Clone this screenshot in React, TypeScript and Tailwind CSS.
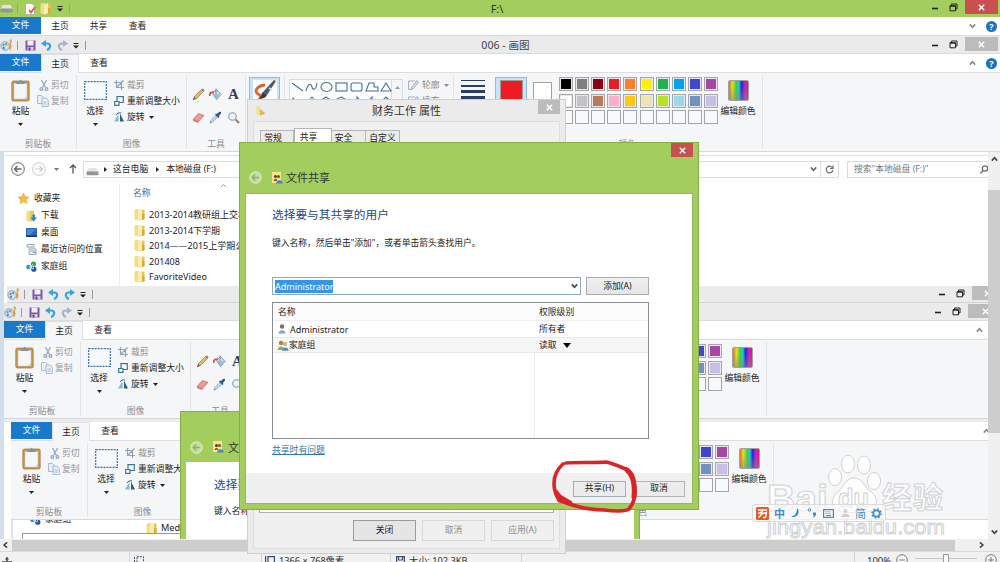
import React from 'react';

const SWATCHES = [
    ['#000000', '#7f7f7f', '#870016', '#ea1c25', '#fe7f29', '#fff200', '#23b14d', '#00a2e9', '#3f48cb', '#a349a3'],
    ['#ffffff', '#c3c3c3', '#b87a57', '#ffaec9', '#ffc90e', '#efe4b0', '#b5e61d', '#99d9ea', '#7092be', '#c8bfe7'],
    ['', '', '', '', '', '', '', '', '', ''],
];

const FILES = ['2013-2014教研组上交材料', '2013-2014下学期', '2014——2015上学期公开课', '201408', 'FavoriteVideo', ''];

const Caret: React.FC<{ className?: string }> = ({ className = '' }) => (
    <svg className={`shrink-0 ${className}`} width="5" height="3" viewBox="0 0 5 3">
        <path d="M0 0H5L2.5 3Z" fill="currentColor" />
    </svg>
);

const Chevron: React.FC<{ up?: boolean; className?: string }> = ({ up, className = '' }) => (
    <svg className={`shrink-0 ${className}`} width="7" height="6" viewBox="0 0 7 6" fill="none" stroke="currentColor" strokeWidth="1.6">
        <path d={up ? 'M0.8 4.6L3.5 1.6L6.2 4.6' : 'M0.8 1.4L3.5 4.4L6.2 1.4'} />
    </svg>
);

const Cross: React.FC = () => (
    <svg width="7" height="7" viewBox="0 0 7 7" stroke="#fff" strokeWidth="1.4">
        <path d="M0.8 0.8L6.2 6.2M6.2 0.8L0.8 6.2" />
    </svg>
);

const Folder: React.FC = () => (
    <svg className="shrink-0" width="11" height="13" viewBox="0 0 11 13">
        <path d="M0.5 1.5L5 0.8V12.5L0.5 11.5Z" fill="#f3dc86" />
        <path d="M5 2L10.5 1.5V11L5 12.5Z" fill="#e8c257" />
        <path d="M4 2.5L8 1V11L4 12.5Z" fill="#fbeeb0" />
        <path d="M8 6H10.5V11.3L8 12Z" fill="#d6a93a" />
    </svg>
);

const Drive: React.FC = () => (
    <svg className="shrink-0" width="13" height="9" viewBox="0 0 13 9">
        <path d="M2.5 1H10.5L12.5 5H0.5Z" fill="#e2e4e6" />
        <rect x="0.5" y="4.5" width="12" height="3.8" rx="1" fill="#8e9499" />
        <rect x="9" y="5.6" width="2" height="1.2" fill="#73d353" />
    </svg>
);

const Palette: React.FC = () => (
    <svg className="shrink-0" width="13" height="13" viewBox="0 0 13 13">
        <path d="M1 8C0 4 3 2 7 3C10 4 10 8 8.500 10C6 12.500 2 12 1 8Z" fill="#b9d8ea" stroke="#6f9fbc" strokeWidth="0.7" />
        <circle cx="3.500" cy="6" r="1" fill="#e0604e" />
        <circle cx="6" cy="5" r="1" fill="#5aa34c" />
        <circle cx="3.800" cy="9" r="1" fill="#3a70c2" />
        <circle cx="6.500" cy="8.500" r="1" fill="#fff" />
        <path d="M10.500 1L11.500 8L10 12L9 8Z" fill="#e8963a" />
        <path d="M9.500 0.500H12V3.500H9.500Z" fill="#c9b37e" />
    </svg>
);

const Save: React.FC = () => (
    <svg className="shrink-0" width="11" height="11" viewBox="0 0 11 11">
        <path d="M0.500 0.500H10.500V10.500H0.500Z" fill="#7b5ba6" />
        <rect x="2.500" y="0.500" width="6" height="5" fill="#f2edf8" />
        <rect x="2.500" y="7" width="6" height="3.500" fill="#d7cbe6" />
        <rect x="3.500" y="7.500" width="2" height="3" fill="#5f4389" />
    </svg>
);

const Undo: React.FC<{ flip?: boolean; muted?: boolean }> = ({ flip, muted }) => (
    <svg className={`shrink-0 ${flip ? '-scale-x-100' : ''}`} width="11" height="11" viewBox="0 0 11 11">
        <path d="M2.500 3.500H6C8.500 3.500 9.500 5 9 7C8.600 8.500 7.500 9.500 6 10" fill="none" stroke={muted ? '#a3b4cc' : '#36a3dc'} strokeWidth="2.200" />
        <path d="M0 3.500L5 0V7Z" fill={muted ? '#a3b4cc' : '#36a3dc'} />
    </svg>
);

const Pipe: React.FC = () => <div className="h-[9px] w-px shrink-0 bg-[#9a9a9a]" />;

const Customize: React.FC = () => (
    <svg className="shrink-0" width="6" height="6" viewBox="0 0 6 6">
        <path d="M0.500 0H5.500V1H0.500ZM0 2.500H6L3 5.500Z" fill="#222" />
    </svg>
);

const WindowButtons: React.FC<{ closeClass: string; cross?: string }> = ({ closeClass, cross = '' }) => (
    <div className="flex shrink-0 items-start">
        <svg className="mt-[3px] mr-[7px]" width="26" height="9" viewBox="0 0 26 9" fill="none" stroke="#222">
            <path d="M0 5.500H6" strokeWidth="1.600" />
            <path d="M19.500 2.500V1H25V6H23.500" />
            <path d="M18 2.700H23.500V7.800H18Z" />
            <path d="M18 3.200H23.500" />
        </svg>
        <div className={`flex h-[14px] items-center justify-center ${closeClass}`}>
            <div className={cross}>
                <Cross />
            </div>
        </div>
    </div>
);

const PaintTitle: React.FC<{ title?: string; redoMuted?: boolean; className: string; closeClass: string; cross?: string }> = ({
    title,
    redoMuted,
    className,
    closeClass,
    cross,
}) => (
    <div className={`flex shrink-0 overflow-hidden bg-[#ebebeb] ${className}`}>
        <div className="flex h-[17px] w-[87px] shrink-0 items-center">
            <Palette />
            <div className="ml-[4px]" />
            <Pipe />
            <div className="ml-[7px] flex items-center gap-[5px]">
                <Save />
                <Undo />
                <Undo flip muted={redoMuted} />
                <Customize />
            </div>
            <div className="ml-[6px]" />
            <Pipe />
        </div>
        <div className="flex flex-1 items-center justify-center pr-[8px] text-[10.600px] text-[#444]">{title}</div>
        <WindowButtons closeClass={closeClass} cross={cross} />
    </div>
);

const Help: React.FC = () => (
    <div className="flex h-[11px] w-[11px] items-center justify-center rounded-full bg-[#1a73bd] text-[9px] font-bold text-white">?</div>
);

const PaintTabs: React.FC<{ help?: boolean; className?: string; chevron?: string }> = ({ help, className = '', chevron = '' }) => (
    <div className={`flex h-[19px] shrink-0 border-b border-[#dcdde0] bg-white ${className}`}>
        <div className="flex h-[17px] w-[41px] items-center justify-center bg-[#1979ca] text-white">文件</div>
        <div className="flex h-[19px] w-[38px] items-center justify-center border-x border-t border-[#dfe1e4] bg-[#f5f6f8]">主页</div>
        <div className="flex w-[40px] items-center justify-center">查看</div>
        <div className={`ml-auto flex items-center gap-[10px] ${chevron}`}>
            <Chevron up className="text-[#888]" />
            {help && <Help />}
        </div>
    </div>
);

const Clipboard: React.FC = () => (
    <svg width="19" height="23" viewBox="0 0 19 23">
        <rect x="0.800" y="2" width="17.400" height="20" rx="1.500" fill="#c7984f" stroke="#9d7437" strokeWidth="0.700" />
        <rect x="3" y="4.500" width="13" height="15.500" fill="#f4f7fa" stroke="#b9c2cb" strokeWidth="0.500" />
        <path d="M5.500 2.500H8L9.500 0.500L11 2.500H13.500V5H5.500Z" fill="#8b9199" />
        <path d="M13 20L16 17V20Z" fill="#c5cdd6" />
    </svg>
);

const Scissors: React.FC = () => (
    <svg width="10" height="11" viewBox="0 0 10 11" fill="none" stroke="#8fa5c2" strokeWidth="1.200">
        <path d="M2.500 0L6.500 7.500M7.500 0L3.500 7.500" />
        <circle cx="2.300" cy="9" r="1.400" />
        <circle cx="7.500" cy="9" r="1.400" />
    </svg>
);

const Copy: React.FC = () => (
    <svg width="12" height="12" viewBox="0 0 12 12" fill="#e9eff6" stroke="#a0b4cd" strokeWidth="0.900">
        <path d="M0.500 0.500H4.500L6.500 2.500V8.500H0.500Z" />
        <path d="M5 3H9L11.300 5.300V11.500H5Z" />
        <path d="M6.500 7H9.500M6.500 9H9.500" />
    </svg>
);

const Tools: React.FC = () => (
    <div className="grid grid-cols-3 justify-items-center gap-y-[10px]">
        <svg width="13" height="13" viewBox="0 0 13 13">
            <path d="M2 9L9.500 1.500L11.500 3.500L4 11Z" fill="#e5b75f" stroke="#8a6b35" strokeWidth="0.600" />
            <path d="M2 9L4 11L0.800 12.200Z" fill="#555" />
            <path d="M9.500 1.500L10.800 0.400L12.500 2.300L11.500 3.500Z" fill="#9b7458" />
        </svg>
        <svg width="13" height="13" viewBox="0 0 13 13">
            <path d="M3.500 5L7.500 1.500L12 6.500L7.500 11.500Z" fill="#d6e5f2" stroke="#6489ae" strokeWidth="0.900" />
            <path d="M0.500 8C0.500 4.500 3 3.500 5 4.500" fill="none" stroke="#d4543a" strokeWidth="1.800" />
            <path d="M7 0.500V6" stroke="#5c7894" strokeWidth="0.800" />
            <path d="M4.500 6H11L7.500 10.500Z" fill="#95bcdc" />
        </svg>
        <div className="font-['Liberation_Serif',serif] text-[15px] leading-[13px] font-bold text-[#2d4058]">A</div>
        <svg width="13" height="13" viewBox="0 0 13 13">
            <path d="M1 8.500L6.500 2.500L12 4.500L6.500 10.500Z" fill="#ef9a95" stroke="#c0615c" strokeWidth="0.700" />
            <path d="M1 8.500L6.500 10.500V12L1 10Z" fill="#d4716c" />
        </svg>
        <svg width="13" height="13" viewBox="0 0 13 13">
            <path d="M1 12L2 9.500L7 4.500L8.500 6L3.500 11Z" fill="#dbe9f5" stroke="#5a84ac" strokeWidth="0.800" />
            <path d="M6 3.500L9.500 7L10.500 6L9.800 5L12 2.500C12.500 1 11.500 0.300 10.300 0.800L8 3L7 2.500Z" fill="#27578b" />
        </svg>
        <svg width="13" height="13" viewBox="0 0 13 13">
            <circle cx="5.500" cy="5.500" r="3.800" fill="#e6f1f9" stroke="#8a9aab" strokeWidth="1.100" />
            <path d="M8.500 8.500L12 12" stroke="#a97852" strokeWidth="2" />
        </svg>
    </div>
);

const Shapes: React.FC = () => (
    <svg width="103" height="32" viewBox="0 0 103 32" fill="none" stroke="#49708f" strokeWidth="1.100">
        <path d="M2 3L13 11" />
        <path d="M16 11C18 3 21 3 22 7C23 11 26 10 27 3" />
        <ellipse cx="36.500" cy="7" rx="5.500" ry="4.500" />
        <rect x="46" y="3" width="11" height="8" />
        <rect x="61" y="3" width="11" height="8" rx="2" />
        <path d="M76 11L79 3H84V7H88V11Z" />
        <path d="M91 11L96 3L101 11Z" />
        <path d="M3 18V28H13ZM22 17L27 23L22 29L17 23ZM36 17L42 21L40 28H32L30 21ZM51 17L57 20V26L51 29L45 26V20ZM61 20H67V17L72 23L67 28V25H61ZM88 20H82V17L77 23L82 28V25H88ZM91 22L96 17L101 22H98V28H94V22Z" />
    </svg>
);

const Ribbon: React.FC<{ className?: string }> = ({ className = '' }) => (
    <div className={`flex h-[79px] shrink-0 overflow-hidden border-b border-[#d6d7da] bg-[#f5f6f8] pt-[2px] pb-[2px] ${className}`}>
        <div className="flex w-[77px] shrink-0 flex-col border-r border-[#e1e3e6]">
            <div className="flex flex-1">
                <div className="ml-[10px] flex w-[21px] flex-col items-center pt-[4px]">
                    <Clipboard />
                    <span className="mt-[5px] whitespace-nowrap">粘贴</span>
                    <Caret className="mt-[7px]" />
                </div>
                <div className="ml-[6px] flex flex-col gap-[4px] pt-[4px] text-[#999]">
                    <div className="flex h-[12px] items-center"><span className="flex w-[14px] justify-center"><Scissors /></span>剪切</div>
                    <div className="flex h-[12px] items-center"><span className="w-[14px]"><Copy /></span>复制</div>
                </div>
            </div>
            <div className="text-center text-[#8c8c8c]">剪贴板</div>
        </div>
        <div className="flex w-[110px] shrink-0 flex-col border-r border-[#e1e3e6]">
            <div className="flex flex-1">
                <div className="ml-[6px] flex w-[24px] flex-col items-center pt-[6px]">
                    <svg width="23" height="19" viewBox="0 0 23 19">
                        <rect x="0.700" y="0.700" width="21.600" height="17.600" fill="#f7fafc" stroke="#3b6f9c" strokeDasharray="2 1" strokeWidth="1.200" />
                    </svg>
                    <span className="mt-[7px] whitespace-nowrap">选择</span>
                    <Caret className="mt-[7px]" />
                </div>
                <div className="ml-[7px] flex flex-col gap-[4px] pt-[4px] whitespace-nowrap">
                    <div className="flex h-[12px] items-center text-[#8c8c8c]">
                        <svg className="mr-[3px]" width="10" height="10" viewBox="0 0 10 10" fill="none" stroke="#8fa5bb" strokeWidth="1.200">
                            <path d="M2.500 0V7.500H10M0 2.500H7.500V10M2.500 7.500L9.500 0.500" />
                        </svg>
                        裁剪
                    </div>
                    <div className="flex h-[12px] items-center">
                        <svg className="mr-[3px]" width="10" height="10" viewBox="0 0 10 10" fill="#fff" stroke="#3a7791" strokeWidth="1.200">
                            <path d="M3 0.700H9.300V6.500H3Z" />
                            <path d="M0.700 5.500H5V9.300H0.700Z" />
                        </svg>
                        重新调整大小
                    </div>
                    <div className="flex h-[12px] items-center">
                        <svg className="mr-[3px]" width="10" height="10" viewBox="0 0 10 10">
                            <path d="M4.500 2V9.500H0Z" fill="#88b8cb" />
                            <path d="M6 1.500V9.500H10Z" fill="#246480" />
                            <path d="M2 3C3 1 5 0.500 7 1" fill="none" stroke="#246480" />
                        </svg>
                        旋转
                        <Caret className="ml-[4px]" />
                    </div>
                </div>
            </div>
            <div className="text-center text-[#8c8c8c]">图像</div>
        </div>
        <div className="flex w-[59px] shrink-0 flex-col border-r border-[#e1e3e6]">
            <div className="flex-1 px-[3px] pt-[13px]"><Tools /></div>
            <div className="text-center text-[#8c8c8c]">工具</div>
        </div>
        <div className="w-[39px] shrink-0 border-r border-[#e1e3e6] pt-[2px] pl-[3px]">
            <div className="flex h-[66px] w-[31px] justify-center border border-[#8fbde2] bg-[#cbe3f6] pt-[2px]">
                <svg width="24" height="24" viewBox="0 0 24 24">
                    <rect width="24" height="24" fill="#fafcfd" />
                    <path d="M12 5C3 6 1 12 5 14C10 16 7 20 2 23" fill="none" stroke="#df6330" strokeWidth="2.800" />
                    <path d="M23 1L14 15L10 12L21 0Z" fill="#4c5b69" />
                    <path d="M14 15C12 19 8 19 6 18C9 17 8 13 10 12Z" fill="#333b44" />
                    <path d="M16 8L19 10" stroke="#cfd8df" strokeWidth="2" />
                </svg>
            </div>
        </div>
        <div className="flex w-[169px] shrink-0 border-r border-[#e1e3e6] pt-[4px] pl-[4px]">
            <div className="h-[48px] w-[103px] border border-[#d4dde5] bg-[#fbfdfe]"><Shapes /></div>
            <div className="flex h-[48px] w-[11px] justify-center border-y border-r border-[#d4dde5] pt-[6px] text-[#8aa1b5]">
                <Caret className="rotate-180" />
            </div>
            <div className="ml-[5px] flex flex-col gap-[4px] whitespace-nowrap text-[#8c8c8c]">
                {['轮廓', '填充'].map((label) => (
                    <div key={label} className="flex h-[12px] items-center">
                        <svg className="mr-[3px]" width="11" height="10" viewBox="0 0 11 10" fill="none" stroke="#9db0c4">
                            <path d="M7 1H0.500V9.500H4" />
                            <path d="M3.500 7.500L9 0.500L10.500 2L5.500 8.500L3 9Z" fill="#d8e1ea" />
                        </svg>
                        {label}
                        <Caret className="ml-[4px]" />
                    </div>
                ))}
            </div>
        </div>
        <div className="flex w-[41px] shrink-0 flex-col pt-[5px] pl-[7px]">
            <div className="h-px w-[24px] bg-[#263f63]" />
            <div className="mt-[4px] h-[2px] w-[24px] bg-[#263f63]" />
            <div className="mt-[3px] h-[3px] w-[24px] bg-[#263f63]" />
            <div className="mt-[3px] h-[5px] w-[24px] bg-[#263f63]" />
        </div>
        <div className="flex w-[268px] shrink-0 flex-col border-r border-[#e1e3e6]">
            <div className="flex flex-1">
                <div className="mt-[2px] flex h-[60px] w-[32px] justify-center border border-[#8fbde2] bg-[#cbe3f6] pt-[2px] pl-px">
                    <div className="h-[22px] w-[23px] border border-[#9b9b9b] bg-[#ed1c24]" />
                </div>
                <div className="mt-[7px] ml-[6px] h-[19px] w-[19px] border border-[#a0a0a0] bg-white" />
                <div className="mt-[2px] ml-[7px] grid h-[48px] w-[161px] grid-cols-10 gap-y-[2px]">
                    {SWATCHES.flat().map((color, i) => (
                        <div key={i} className={`h-[14px] w-[14px] border p-px ${color ? 'border-[#a8a8a8] bg-[#e9e6ee]' : 'border-[#a3a5a8] bg-[#f8f9fa]'}`}>
                            <div className="h-full w-full" style={{ backgroundColor: color }} />
                        </div>
                    ))}
                </div>
                <div className="flex w-[36px] flex-col items-center pt-[5px]">
                    <div className="h-[21px] w-[21px] rounded-[2px] border border-[#a0a0a0] bg-[linear-gradient(to_top,#8888,transparent_70%),linear-gradient(to_right,#d87a20,#e8dc20_18%,#35d53c_38%,#25c8dc_52%,#2525d8_66%,#d021c8_85%,#d82050)]" />
                    <span className="mt-[6px] whitespace-nowrap">编辑颜色</span>
                </div>
            </div>
            <div className="pr-[3px] text-center text-[#8c8c8c]">颜色</div>
        </div>
    </div>
);

const People: React.FC = () => (
    <svg className="shrink-0" width="12" height="11" viewBox="0 0 12 11">
        <circle cx="4" cy="3" r="2.200" fill="#a8824a" />
        <path d="M0.500 10C0.500 6 7 5 7.500 10Z" fill="#85b45d" />
        <circle cx="8" cy="4" r="2.200" fill="#d9af7d" />
        <path d="M5 10.800C5 6.500 11.500 6 11.700 10.800Z" fill="#5889bf" />
    </svg>
);

const ShareIcon: React.FC = () => (
    <svg className="shrink-0" width="11" height="12" viewBox="0 0 11 12">
        <rect width="9" height="11" fill="#f7e58c" />
        <circle cx="3.500" cy="4.500" r="1.500" fill="#4e3c2d" />
        <circle cx="6.500" cy="4.500" r="1.500" fill="#744e31" />
        <path d="M1.500 9C2 6 5 6 5.500 9Z" fill="#9f5440" />
        <path d="M4 11.500C4.500 7 10.500 7 11 11.500Z" fill="#4989ae" />
    </svg>
);

const BackDisc: React.FC = () => (
    <svg className="shrink-0" width="13" height="13" viewBox="0 0 13 13">
        <circle cx="6.500" cy="6.500" r="5.800" fill="#c7dfa0" stroke="#dcebc4" />
        <path d="M9.800 6.500H3.500M6.200 3.500L3.200 6.500L6.200 9.500" fill="none" stroke="#8fae66" strokeWidth="1.400" />
    </svg>
);

const Explorer: React.FC = () => (
    <div className="flex h-[134px] shrink-0 flex-col overflow-hidden bg-white">
        <div className="ml-[4px] h-[4px] shrink-0 border-b border-[#dfe0e3]" />
        <div className="mt-[4px] flex h-[18px] shrink-0 items-center pl-[11px]">
            <svg width="14" height="14" viewBox="0 0 14 14" fill="none" stroke="#666">
                <circle cx="7" cy="7" r="6.300" />
                <path d="M10.500 7H4M6.500 4L3.500 7L6.500 10" strokeWidth="1.400" />
            </svg>
            <svg className="ml-[7px]" width="14" height="14" viewBox="0 0 14 14" fill="none" stroke="#c6c6c6">
                <circle cx="7" cy="7" r="6.300" />
                <path d="M3.500 7H10M7.500 4L10.500 7L7.500 10" strokeWidth="1.200" />
            </svg>
            <Caret className="ml-[8px] text-[#777]" />
            <svg className="ml-[10px]" width="8" height="10" viewBox="0 0 8 10" fill="none" stroke="#555" strokeWidth="1.300">
                <path d="M4 9.500V1M1 4L4 1L7 4" />
            </svg>
            <div className="ml-[6px] flex h-[17px] w-[756px] items-center border border-[#dcdcdc]">
                <div className="ml-[2px] mt-[4px]"><Drive /></div>
                <Caret className="ml-[4px] -rotate-90" />
                <span className="ml-[5px]">这台电脑</span>
                <Caret className="ml-[7px] -rotate-90" />
                <span className="ml-[6px]">本地磁盘 (F:)</span>
                <Chevron className="mr-[3px] ml-auto text-[#666]" />
                <div className="flex h-full w-[18px] items-center justify-center border-l border-[#dcdcdc]">
                    <svg width="9" height="9" viewBox="0 0 9 9" fill="none" stroke="#666" strokeWidth="1.200">
                        <path d="M7.500 3A3.300 3.300 0 1 0 7.800 5.200" />
                        <path d="M8 0.500V3.500H5" />
                    </svg>
                </div>
            </div>
            <div className="ml-[8px] flex h-[17px] w-[141px] items-center border-y border-l border-[#dcdcdc] pl-[6px] text-[#777]">
                搜索"本地磁盘 (F:)"
                <svg className="ml-auto" width="8" height="9" viewBox="0 0 8 9" fill="none" stroke="#666" strokeWidth="1.300">
                    <circle cx="5" cy="3.500" r="2.700" />
                    <path d="M3 5.500L0.500 8.500" />
                </svg>
            </div>
        </div>
        <div className="flex min-h-0 flex-1">
            <div className="mt-[5px] flex w-[120px] shrink-0 flex-col border-r border-[#ededed] pt-[7px]">
                <div className="flex h-[17px] items-center gap-[5px] pl-[18px]">
                    <svg width="11" height="11" viewBox="0 0 11 11">
                        <path d="M5.500 0.300L7.100 3.800L10.800 4.200L8 6.700L8.800 10.500L5.500 8.600L2.200 10.500L3 6.700L0.200 4.200L3.900 3.800Z" fill="#fbbf3e" stroke="#dd8b2b" strokeWidth="0.600" />
                    </svg>
                    收藏夹
                </div>
                <div className="flex h-[17px] items-center gap-[4px] pl-[26px]">
                    <svg width="11" height="12" viewBox="0 0 11 12">
                        <path d="M0.500 1L8 0.500V11L0.500 11.500Z" fill="#f3db82" />
                        <path d="M4 1.500L8 0.500V11L4 11.500Z" fill="#e8c764" />
                        <path d="M6.500 4.500H9V7.500H11L7.700 11.500L4.500 7.500H6.500Z" fill="#258bcf" />
                    </svg>
                    下载
                </div>
                <div className="flex h-[17px] items-center gap-[4px] pl-[26px]">
                    <svg width="11" height="9" viewBox="0 0 11 9">
                        <rect width="11" height="9" rx="0.500" fill="#2d65b5" />
                        <path d="M1 1H10L4 7H1Z" fill="#4c88d4" />
                        <rect y="7.500" width="11" height="1.500" fill="#1d355b" />
                    </svg>
                    桌面
                </div>
                <div className="flex h-[17px] items-center gap-[4px] pl-[26px]">
                    <svg width="11" height="11" viewBox="0 0 11 11" fill="#e6edf3" stroke="#8598a8" strokeWidth="0.800">
                        <path d="M1 0.500H8V5H10V10.500H3V3H1Z" />
                        <path d="M4 3H7M4 5H7M4.500 7H8.500" />
                        <path d="M7 8.500L10 8" stroke="#3f83c3" />
                    </svg>
                    最近访问的位置
                </div>
                <div className="flex h-[17px] items-center gap-[4px] pl-[26px]"><HomeGroup />家庭组</div>
            </div>
            <div className="w-[123px] shrink-0 overflow-hidden pt-[4px] pl-[13px]">
                <div className="flex h-[22px] items-center text-[#56677b]">
                    名称
                    <svg className="mb-[15px] ml-[70px]" width="5" height="3" viewBox="0 0 5 3" fill="none" stroke="#8296a8">
                        <path d="M0.300 2.700L2.500 0.500L4.700 2.700" />
                    </svg>
                </div>
                <div className="pt-[3px]">
                    {FILES.map((name) => (
                        <div key={name} className="flex h-[15.500px] items-center gap-[4px] pl-[1px] whitespace-nowrap">
                            <Folder />
                            <span className="text-[9px]">{name}</span>
                        </div>
                    ))}
                </div>
            </div>
        </div>
    </div>
);

const HomeGroup: React.FC = () => (
    <svg className="shrink-0" width="11" height="11" viewBox="0 0 11 11">
        <circle cx="2.500" cy="6" r="2.300" fill="#3390c8" />
        <circle cx="7.500" cy="3" r="2.600" fill="#3ea152" />
        <circle cx="7.800" cy="8.200" r="2.600" fill="#28569e" />
        <path d="M3 6L7 3.500L7.500 8Z" fill="none" stroke="#c6e0ee" strokeWidth="0.800" />
    </svg>
);

const StatusBar: React.FC = () => (
    <div className="flex h-[11px] shrink-0 overflow-hidden border-t border-[#dadada] bg-[#f1f1f1] text-[#333]">
        <div className="w-[130px] shrink-0 border-r border-[#d4d4d4] pt-[5px] pl-[2px]">
            <svg width="10" height="10" viewBox="0 0 10 10" stroke="#39506c" strokeWidth="1.500">
                <path d="M5 0V10M0 5H10M3.500 2H6.500" />
            </svg>
        </div>
        <div className="w-[132px] shrink-0 border-r border-[#d4d4d4] pt-[4px] pl-[4px]">
            <svg width="10" height="9" viewBox="0 0 10 9" fill="none" stroke="#39506c">
                <path d="M0.500 9V0.500M3 0.700H9.500V9H3Z" strokeDasharray="2 1" />
            </svg>
        </div>
        <div className="flex w-[129px] shrink-0 border-r border-[#d4d4d4] pt-[4px] pl-[3px]">
            <svg width="10" height="9" viewBox="0 0 10 9" fill="none" stroke="#39506c" strokeWidth="1.200">
                <path d="M0.600 0V9M3 0.700H9.400V9H3Z" />
            </svg>
            <span className="ml-[4px] text-[9.200px] whitespace-nowrap">1366 × 768像素</span>
        </div>
        <div className="flex w-[131px] shrink-0 border-r border-[#d4d4d4] pt-[4px] pl-[5px]">
            <svg width="9" height="9" viewBox="0 0 9 9" fill="none" stroke="#39506c" strokeWidth="1.200">
                <path d="M0.600 0.600H8.400V9H0.600ZM2.500 0.600V4H6.500V0.600" />
            </svg>
            <span className="ml-[4px] text-[9.200px] whitespace-nowrap">大小: 102.3KB</span>
        </div>
        <div className="w-[333px] shrink-0 border-r border-[#d4d4d4]" />
        <span className="ml-[12px] pt-[4px] text-[9.500px]">100%</span>
        <svg className="ml-auto shrink-0" width="104" height="10" viewBox="0 0 104 10" fill="#fafafa" stroke="#777">
            <circle cx="6" cy="8" r="5.300" />
            <path d="M3 8H9" />
            <path d="M19 6.500H81" stroke="#c5c5c5" />
            <path d="M47.500 2.500H52.500V11H47.500Z" stroke="#999" />
            <circle cx="95" cy="8" r="5.300" />
            <path d="M92 8H98M95 5V11" />
        </svg>
    </div>
);

const RearShareDialog: React.FC = () => (
    <div className="absolute top-[411px] left-[180px] flex h-[128px] w-[460px] flex-col overflow-hidden border-x border-t border-[#86ad48] bg-[#a3cd5f] px-[5px]">
        <div className="flex h-[50px] shrink-0 items-center pt-[20px] pl-[4px]">
            <BackDisc />
            <div className="ml-[10px]"><ShareIcon /></div>
            <span className="ml-[4px] text-[11px] text-[#333]">文件共享</span>
        </div>
        <div className="flex-1 bg-white pt-[17px] pl-[28px]">
            <div className="text-[11.700px] text-[#1f4a7d]">选择要与其共享的用户</div>
            <div className="mt-[16px]">键入名称，然后单击"添加"，或者单击箭头查找用户。</div>
        </div>
    </div>
);

const PropertiesDialog: React.FC = () => (
    <div className="absolute top-[99px] left-[247px] flex h-[455px] w-[319px] flex-col border border-[#cfcfcf] bg-[#ebebeb] px-[5px] pb-[4px]">
        <div className="flex h-[21px] shrink-0 items-start">
            <svg className="mt-[5px] ml-[3px]" width="10" height="11" viewBox="0 0 10 11">
                <path d="M0.500 1.500L4 0.500V10.500L0.500 9.500Z" fill="#f4df8f" />
                <path d="M4 4L9.500 8.500L4 10.500Z" fill="#dfb64b" />
            </svg>
            <span className="mt-[5px] flex-1 pl-[9px] text-center text-[11px] text-[#333]">财务工作 属性</span>
            <div className="flex h-[14px] w-[22px] items-center justify-center bg-[#bcbcbc]"><Cross /></div>
        </div>
        <div className="flex flex-1 flex-col border border-[#dedede] bg-[#f0f0f0] px-[5px]">
            <div className="flex h-[30px] items-end pl-px">
                <div className="flex h-[22px] w-[34px] justify-center border border-[#b5b5b5] bg-[#ececec] pt-[3px] pr-[8px]">常规</div>
                <div className="flex h-[24px] w-[38px] justify-center border border-b-0 border-[#b5b5b5] bg-white pt-[4px] pr-[9px]">共享</div>
                <div className="flex h-[22px] w-[34px] justify-center border border-l-0 border-[#b5b5b5] bg-[#ececec] pt-[3px] pr-[10px]">安全</div>
                <div className="flex h-[22px] w-[34px] justify-center border border-l-0 border-[#b5b5b5] bg-[#ececec] pt-[3px]">自定义</div>
            </div>
            <div className="flex-1 border border-[#aeb0b2] bg-white" />
            <div className="flex h-[35px] items-start justify-end gap-[6px] pt-[7px]">
                <div className="flex h-[21px] w-[63px] items-center justify-center border border-[#9c9c9c] bg-[#e5e5e5]">关闭</div>
                <div className="flex h-[21px] w-[63px] items-center justify-center border border-[#d8d8d8] text-[#8f8f8f]">取消</div>
                <div className="flex h-[21px] w-[63px] items-center justify-center border border-[#d8d8d8] text-[#8f8f8f]">应用(A)</div>
            </div>
        </div>
    </div>
);

const ShareDialog: React.FC = () => (
    <div className="absolute top-[142px] left-[239px] flex h-[368px] w-[460px] flex-col border border-[#86ad48] bg-[#a3cd5f] px-[5px] pb-[5px]">
        <div className="flex h-[50px] shrink-0">
            <div className="flex items-center pt-[19px] pl-[4px]">
                <BackDisc />
                <div className="ml-[10px]"><ShareIcon /></div>
                <span className="ml-[3px] text-[11px] text-[#333]">文件共享</span>
            </div>
            <div className="ml-auto flex h-[14px] w-[22px] items-center justify-center bg-[#c75050]"><Cross /></div>
        </div>
        <div className="flex flex-1 flex-col border border-[#93b95a] bg-white">
            <div className="flex-1 pt-[15px] pl-[26px]">
                <div className="text-[11.700px] text-[#1f4a7d]">选择要与其共享的用户</div>
                <div className="mt-[18px] text-[8.750px] whitespace-nowrap">
                    键入名称<span className="inline-block w-[8.800px]">，</span>然后单击"添加"，或者单击箭头查找用户。
                </div>
                <div className="mt-[30px] flex gap-[5px]">
                    <div className="flex h-[18px] w-[309px] items-center border border-[#8cabb9] pl-[2px]">
                        <span className="bg-[#3596e8] py-[2px] text-[9px] text-white">Administrator</span>
                        <Chevron className="mr-[2px] ml-auto text-[#444]" />
                    </div>
                    <div className="flex h-[18px] w-[63px] items-center justify-center border border-[#acacac] bg-gradient-to-b from-[#f0f0f0] to-[#e5e5e5]">添加(A)</div>
                </div>
                <div className="mt-[7px] flex h-[137px] w-[377px] flex-col border border-[#878d94]">
                    <div className="flex h-[18px] items-center border-b border-[#f0f0f0] bg-[#fcfcfc]">
                        <span className="w-[262px] pl-[5px]">名称</span>
                        <span className="pl-[4px]">权限级别</span>
                    </div>
                    <div className="flex h-[16px] items-center">
                        <span className="flex w-[262px] items-center pl-[5px]">
                            <svg className="mr-[4px]" width="8" height="10" viewBox="0 0 8 10">
                                <circle cx="4" cy="2.500" r="2.200" fill="#876a50" />
                                <path d="M0.500 9.500C0.500 5 7.500 5 7.500 9.500Z" fill="#7aa5cb" />
                            </svg>
                            <span className="text-[9px]">Administrator</span>
                        </span>
                        <span className="pl-[4px]">所有者</span>
                    </div>
                    <div className="flex h-[16px] items-center border-y border-[#e9e9e9] bg-[#f6f6f6]">
                        <span className="flex w-[262px] items-center pl-[4px]">
                            <People />家庭组
                        </span>
                        <span className="pl-[4px]">读取</span>
                        <svg className="ml-[6px]" width="8" height="5" viewBox="0 0 8 5"><path d="M0 0H8L4 5Z" /></svg>
                    </div>
                    <div className="ml-[261px] flex-1 border-l border-[#ededed]" />
                </div>
                <div className="mt-[7px] text-[#2b779f] underline underline-offset-1">共享时有问题</div>
            </div>
            <div className="flex h-[30px] items-center justify-end gap-[7px] bg-[#f0f0f0] pr-[7px] pt-px">
                <div className="flex h-[16px] w-[53px] items-center justify-center border border-[#9fb0bb] bg-[#ececec]">共享(H)</div>
                <div className="flex h-[16px] w-[52px] items-center justify-center border border-[#b3b3b3] bg-[#ececec]">取消</div>
            </div>
        </div>
    </div>
);

const ImeBar: React.FC = () => (
    <div className="absolute top-[504px] left-[752px] flex h-[18px] w-[134px] items-center rounded-[3px] border border-[#d9dbdd] bg-[#fbfbfc]/60 px-[3px] text-[11px] text-[#3c8ccb]">
        <svg width="13" height="13" viewBox="0 0 13 13">
            <rect width="13" height="13" rx="1.500" fill="#e2592b" />
            <path d="M2 3H11M2 6.500L6 5L5 8L2.500 10.500M5 7L10.500 5.500L9.500 10.500H7" fill="none" stroke="#fff" strokeWidth="1.400" />
        </svg>
        <span className="ml-[5px] font-bold">中</span>
        <svg className="ml-[6px]" width="9" height="10" viewBox="0 0 9 10">
            <path d="M6 0C10 4 6 11 0 8.500C4 8 6 5 6 0Z" fill="currentColor" />
        </svg>
        <svg className="ml-[7px]" width="10" height="10" viewBox="0 0 10 10">
            <circle cx="2.500" cy="2" r="1.300" fill="none" stroke="currentColor" />
            <path d="M6 4.500H9V7L7 9.500H6L7 7H6Z" fill="currentColor" />
        </svg>
        <svg className="ml-[6px]" width="11" height="9" viewBox="0 0 11 9" fill="none" stroke="currentColor">
            <rect x="0.600" y="0.600" width="9.800" height="7.800" strokeWidth="1.200" />
            <path d="M2.500 2.800H8.500M2.500 4.500H8.500" strokeDasharray="1 1" />
            <path d="M3 6.500H8" />
        </svg>
        <svg className="ml-[7px]" width="9" height="8" viewBox="0 0 9 8" fill="#cfcfcf">
            <circle cx="4.500" cy="2" r="2" />
            <path d="M0 8C1 3.500 8 3.500 9 8Z" />
        </svg>
        <span className="ml-[5px]">简</span>
        <svg className="ml-[5px]" width="11" height="11" viewBox="0 0 11 11" fill="none" stroke="currentColor">
            <circle cx="5.500" cy="5.500" r="3.200" strokeWidth="1.700" />
            <circle cx="5.500" cy="5.500" r="4.600" strokeWidth="1.400" strokeDasharray="1.800 1.800" />
        </svg>
    </div>
);

const Watermark: React.FC = () => (
    <svg className="absolute top-[450px] left-[760px]" width="195" height="95" viewBox="0 0 195 95" fill="#fff" fillOpacity="0.85" stroke="#cfd1d3" strokeWidth="1">
        <text x="7" y="61" fontFamily="Liberation Sans, sans-serif" fontWeight="bold" fontSize="37" textLength="61" lengthAdjust="spacingAndGlyphs">Bai</text>
        <ellipse cx="75" cy="27" rx="6.500" ry="8.500" />
        <ellipse cx="88" cy="14" rx="6.500" ry="9" />
        <ellipse cx="104" cy="15" rx="6.500" ry="9" />
        <ellipse cx="114" cy="31" rx="6.500" ry="8.500" />
        <path d="M94 28C86 28 84 36 79 41C71 46 70 58 78 61C85 63 103 63 110 61C119 58 118 46 110 41C104 36 102 28 94 28Z" />
        <text x="78" y="57" fontFamily="Liberation Sans, sans-serif" fontWeight="bold" fontSize="26" textLength="31" lengthAdjust="spacingAndGlyphs">du</text>
        <text x="122" y="58" fontFamily="Noto Sans CJK SC, sans-serif" fontWeight="bold" fontSize="30" textLength="61">经验</text>
        <text x="7" y="84" fontFamily="Liberation Sans, sans-serif" fontSize="21" textLength="178" lengthAdjust="spacingAndGlyphs">jingyan.baidu.com</text>
    </svg>
);

const App: React.FC = () => {
    return (
        <div className="relative flex h-[562px] w-[1000px] flex-col overflow-hidden bg-white font-['Noto_Sans','Noto_Sans_CJK_SC',sans-serif] text-[8.800px] leading-none text-[#222]">
            <div className="flex h-[17px] shrink-0 bg-[#a3cd5f]">
                <div className="flex w-[71px] shrink-0 items-center">
                    <Drive />
                    <div className="ml-[4px]" />
                    <Pipe />
                    <svg className="ml-[7px]" width="11" height="12" viewBox="0 0 11 12">
                        <path d="M0.500 0.500H7L9.500 3V11.500H0.500Z" fill="#fff" stroke="#a0a0a0" strokeWidth="0.700" />
                        <path d="M4 7L6 9.500L10 4" fill="none" stroke="#dd5b3c" strokeWidth="1.800" />
                    </svg>
                    <div className="ml-[4px]"><Folder /></div>
                    <div className="mx-[6px]"><Customize /></div>
                    <Pipe />
                </div>
                <div className="flex flex-1 items-center justify-center pr-[9px] text-[11px] text-[#333]">F:\</div>
                <WindowButtons closeClass="w-[33px] mr-[2px] bg-[#c75050]" />
            </div>
            <div className="flex h-[19px] shrink-0 border-b border-[#dcdcdc]">
                <div className="flex h-[17px] w-[41px] items-center justify-center bg-[#1979ca] text-white">文件</div>
                <div className="flex w-[38px] items-center justify-center">主页</div>
                <div className="flex w-[39px] items-center justify-center">共享</div>
                <div className="flex w-[39px] items-center justify-center">查看</div>
                <div className="mr-[3px] ml-auto flex items-center gap-[10px]">
                    <Chevron className="text-[#888]" />
                    <Help />
                </div>
            </div>
            <PaintTitle title="006 - 画图" redoMuted className="h-[18px] border-b border-[#dcdcdc] pt-px" closeClass="w-[33px] mr-[2px] bg-[#bcbcbc]" />
            <PaintTabs help chevron="mr-[3px]" />
            <Ribbon />
            <div className="flex h-[387px] shrink-0">
                <div className="flex w-[988px] shrink-0 flex-col overflow-hidden border-l-4 border-[#d3deed]">
                    <div className="-ml-[4px] border-l-4 border-[#d3deed]">
                        <div className="-ml-[4px]"><Explorer /></div>
                    </div>
                    <PaintTitle className="ml-[3px] h-[17px] border-b border-[#d4d4d4]" closeClass="w-[16px] bg-[#bcbcbc]" cross="ml-[14px]" />
                    <PaintTitle redoMuted className="h-[18px] border-b border-[#dcdcdc] pt-px" closeClass="w-[20px] bg-[#bcbcbc]" cross="ml-[14px]" />
                    <PaintTabs chevron="mr-[5px]" />
                    <Ribbon />
                    <div className="h-[3px] shrink-0 bg-[#ebebeb]" />
                    <PaintTabs className="ml-[7px]" chevron="-mr-[2px]" />
                    <Ribbon className="ml-[7px]" />
                    <div className="ml-[7px] flex flex-1 flex-col overflow-hidden border-l-2 border-[#dbe4f0] pl-[9px]">
                        <div className="-mt-[5px] flex h-[9px] shrink-0 items-center gap-[4px] pl-[8px]"><HomeGroup />家庭组</div>
                        <div className="flex h-[8px] shrink-0 items-center gap-[4px] pl-[124px] text-[9.200px]"><Folder />Media</div>
                        <div className="mt-px h-[6px] w-[200px] shrink-0 border-t border-l border-[#999]" />
                    </div>
                </div>
                <div className="flex w-[12px] flex-col items-center bg-[#f0f0f0] pt-[4px]">
                    <Chevron up className="text-[#444]" />
                    <div className="mt-[28px] h-[243px] w-full bg-[#cdcdcd]" />
                    <Chevron className="mt-auto mb-[4px] text-[#444]" />
                </div>
            </div>
            <div className="flex h-[12px] shrink-0 items-center bg-[#f0f0f0]">
                <Chevron className="ml-[2px] rotate-90 text-[#444]" />
                <div className="ml-[3px] h-[11px] w-[943px] bg-[#cdcdcd]" />
                <Chevron className="ml-[23px] -rotate-90 text-[#444]" />
            </div>
            <StatusBar />
            <RearShareDialog />
            <PropertiesDialog />
            <ShareDialog />
            <Watermark />
            <ImeBar />
            <svg className="absolute top-[455px] left-[548px]" width="95" height="62" viewBox="0 0 95 62" fill="none" stroke="#d8252a" strokeLinecap="round" strokeLinejoin="round">
                <path d="M15 9C7 16 5 25 6.500 34C8 41 10 44 13 46C25 51 42 55 56 55C66 56 78 57 81 54C87 47 88 37 86 27C85 21 84 18 78 14C70 11 64 8 58 7C45 8 29 7 18 8" strokeWidth="3.600" />
                <path d="M79 15C85 20 87 31 86 42" strokeWidth="5" />
                <path d="M8 36L11 46L23 47.500L12 41Z" fill="#e0171d" strokeWidth="3" />
            </svg>
        </div>
    );
};

export default App;
